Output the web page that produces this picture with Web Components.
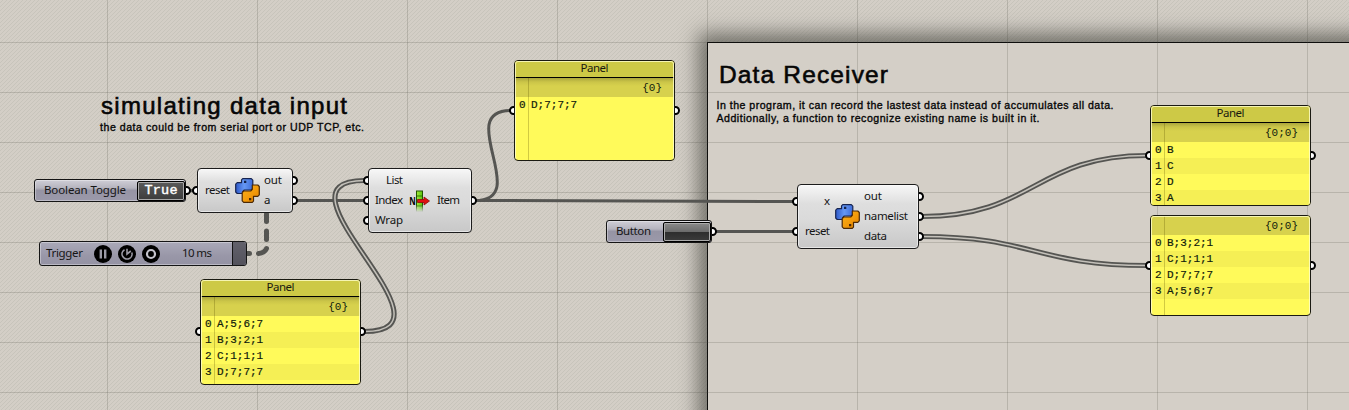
<!DOCTYPE html>
<html lang="en">
<head>
<meta charset="utf-8">
<title>Node canvas</title>
<style>
html,body{margin:0;height:410px;overflow:hidden}
</style>
</head>
<body>
<node-canvas></node-canvas>
<script>
const UI = '"Noto Sans","Open Sans",sans-serif';
const MONO = '"Liberation Mono",monospace';

function define(name, html, setup) {
  const t = document.createElement('template');
  t.innerHTML = html;
  customElements.define(name, class extends HTMLElement {
    connectedCallback() {
      if (this.shadowRoot) return;
      this.attachShadow({mode: 'open'}).append(t.content.cloneNode(true));
      if (setup) setup(this, this.shadowRoot);
    }
  });
}

/* single line of text whose tracking is adjusted to a given width */
define('fit-text', `<style>:host{display:block;white-space:pre;line-height:1}span{display:inline-block}</style><span><slot></slot></span>`,
  (el, root) => {
    const w = +el.getAttribute('w');
    if (!w) return;
    const n = el.textContent.length;
    const s = root.querySelector('span');
    el.style.width = w + 'px';
    s.style.letterSpacing = (w - s.getBoundingClientRect().width) / (n - 1) + 'px';
  });

/* half-hidden connection grip on the edge of a node */
define('node-port', `<style>
:host{position:absolute;box-sizing:border-box;width:9px;height:9px;border:2px solid #000;border-radius:50%;background:#fff;z-index:-1}
</style>`, (el) => {
  el.style.top = (+el.getAttribute('y') - 4.5) + 'px';
  el.style[el.getAttribute('side')] = '-5px';
});

define('python-icon', `<style>:host{display:block;width:25px;height:25px}svg{display:block}</style>
<svg width="25" height="25" viewBox="0 0 25 25">
<defs><linearGradient id="b" x1="0" y1="0" x2="1" y2="0"><stop offset="0" stop-color="#2d58c8"/><stop offset=".5" stop-color="#6698f4"/><stop offset="1" stop-color="#3d6cd8"/></linearGradient>
<linearGradient id="o" x1="0" y1="0" x2="1" y2="1"><stop offset="0" stop-color="#f9b31c"/><stop offset=".55" stop-color="#f39a0a"/><stop offset="1" stop-color="#e07f00"/></linearGradient></defs>
<path d="M7.700 .7H16.300L17.800 2.200V10.500L16.300 12H9.300L7.700 13.600V15.500H2.200L.7 14V6.200L2.200 4.700H6.500V1.900Z" fill="url(#b)" stroke="#17244f" stroke-width="1.200" stroke-linejoin="round"/>
<path d="M17.300 24.300H8.700L7.200 22.800V14.500L8.700 13H15.700L17.300 11.400V7H22.800L24.300 8.500V16.800L22.800 18.300H18.500V23.100Z" fill="url(#o)" stroke="#4b2907" stroke-width="1.200" stroke-linejoin="round"/>
<rect x="9" y="2.700" width="2.300" height="2.300" fill="#14224a"/><rect x="14" y="20" width="2.300" height="2.300" fill="#4b2907"/>
</svg>`);

define('item-icon', `<style>:host{display:block;width:24px;height:24px}svg{display:block;overflow:visible}text{font:bold 10px ${UI}}</style>
<svg width="24" height="24" viewBox="0 0 24 24">
<defs><linearGradient id="g" x1="0" y1="0" x2="1" y2="0"><stop offset="0" stop-color="#a4e83c"/><stop offset="1" stop-color="#56c40c"/></linearGradient>
<linearGradient id="f" x1="0" y1="0" x2="0" y2="1"><stop offset=".7" stop-color="#fff"/><stop offset="1" stop-color="#000"/></linearGradient>
<mask id="m"><rect width="24" height="24" fill="url(#f)"/></mask></defs>
<g mask="url(#m)"><rect x="7.500" y="3" width="6" height="21" fill="url(#g)" stroke="#235400"/><path d="M8 8h5M8 18h5" stroke="#2f7a00"/></g>
<text x="0.300" y="16.500" textLength="6.500" lengthAdjust="spacingAndGlyphs">N</text>
<path d="M8.500 11.500H15V9L20.500 13L15 17V14.500H8.500Z" fill="#e01010" stroke="#8c0a0a" stroke-width=".8"/>
</svg>`);

/* light component body: inputs, icon, outputs */
define('node-component', `<style>
:host{position:absolute;isolation:isolate;font:11.500px ${UI};color:#141414}
.body{box-sizing:border-box;width:100%;height:100%;border:1px solid #1c1c1c;border-radius:4px;background:linear-gradient(#f7f7f7 0,#ededed 12%,#dedede 30%,#dadada 55%,#c8c8c8 100%);box-shadow:inset 0 0 0 1px rgba(255,255,255,.55);display:flex;align-items:center}
::slotted([slot=in]),::slotted([slot=out]){display:flex;flex-direction:column;justify-content:space-around;padding-bottom:2px}
</style><slot name="port"></slot><div class="body"><slot name="in"></slot><slot name="icon"></slot><slot name="out"></slot></div>`);

/* violet-grey parameter bar */
define('node-bar', `<style>
:host{position:absolute;isolation:isolate;font:11.500px ${UI};color:#161616}
.body{box-sizing:border-box;width:100%;height:100%;border:1px solid #151515;border-radius:3px;background:var(--bar,linear-gradient(#cfced6 0,#b5b4be 38%,#9694a4 50%,#9b99aa 100%));box-shadow:inset 0 0 0 1px rgba(255,255,255,.35);display:flex;align-items:center;overflow:hidden}
</style><slot name="port"></slot><div class="body"><slot></slot></div>`);

define('value-well', `<style>
:host{display:flex;box-sizing:border-box;height:20px;border:1px solid #000;border-radius:2px;box-shadow:inset 0 0 0 1px #aaa;background:var(--well,linear-gradient(#5a5a5a,#3c3c3c));align-items:center;justify-content:center;color:#fff;font:13.500px ${MONO};-webkit-text-stroke:.4px #fff;margin-left:auto}
</style><slot></slot>`);

define('round-button', `<style>:host{display:block;width:18px;height:18px}svg{display:block}</style>
<svg width="18" height="18" viewBox="0 0 18 18"><circle cx="9" cy="9" r="9"/><g fill="none" stroke="#9b9aa6" stroke-width="1.700"></g></svg>`,
  (el, root) => {
    root.querySelector('g').innerHTML = {
      pause: '<path d="M6.800 4.500v9M11.200 4.500v9" stroke-width="2.400"/>',
      reset: '<path d="M13.800 7.500A5 5 0 1 1 6.500 4.700M9 3.800V9L12.800 6" stroke-width="1.600"/>',
      stop: '<circle cx="9" cy="9" r="4" stroke="#c4c3cc" stroke-width="2.200"/>'
    }[el.getAttribute('kind')];
  });

/* yellow data panel */
define('data-panel', `<style>
:host{position:absolute;isolation:isolate;width:161px;color:#10200c;font:11px ${MONO}}
.body{box-sizing:border-box;width:100%;height:100%;border:1px solid #1a1a12;border-radius:4px;background:#fffa5a;overflow:hidden;display:flex;flex-direction:column;position:relative}
.body::after{content:"";position:absolute;inset:0;border:1px solid rgba(255,255,205,.8);border-bottom-color:transparent;border-radius:3px}
.title{height:17px;flex:none;box-sizing:border-box;border-bottom:1px solid #000;background:#cdc946;font:11.500px ${UI};display:flex;justify-content:center;line-height:14px;color:#1a1a10}
.path{height:19px;flex:none;background:#d7d14d;display:flex;justify-content:flex-end;align-items:center;padding-right:12px}
.title+.path{background:linear-gradient(#aaa63c 0,#cbc548 4px,#d7d14d 8px)}
.row{height:16px;flex:none;display:flex;line-height:16px;-webkit-text-stroke:.2px #10200c}
.row:nth-child(even){background:#f5ef55}
.i{width:16px;box-sizing:border-box;padding-left:4px;flex:none}
.rows{flex:none}
.rule{position:absolute;left:13px;top:var(--rule,17px);bottom:0;width:1px;background:rgba(90,80,0,.28)}
</style><slot name="port"></slot><div class="body"></div>`, (el, root) => {
  const title = el.getAttribute('label'), rows = el.getAttribute('rows').split('|');
  if (!title) el.style.setProperty('--rule', '0');
  root.querySelector('.body').innerHTML =
    (title ? `<div class="title"><fit-text w="28" style="line-height:14px">${title}</fit-text></div>` : '') +
    `<div class="path"><span>${el.getAttribute('path')}</span></div><div class="rows">` +
    rows.map((r, i) => `<div class="row"><span class="i">${i}</span><span>${r}</span></div>`).join('') +
    '</div><div class="rule"></div>';
});

/* group frame with a soft dark halo */
define('group-frame', `<style>
:host{position:absolute;left:707px;top:42px;width:700px;height:440px;box-sizing:border-box;border:1px solid #000;background:#d4cfc7;box-shadow:0 0 18px 9px rgba(60,60,54,.62)}
</style>`);

define('canvas-note', `<style>:host{position:absolute;color:#060606;font-family:"Liberation Sans",Arial,sans-serif;display:flex;flex-direction:column}</style><slot></slot>`);

define('node-canvas', `<style>
:host{display:block;position:relative;width:1349px;height:410px;overflow:hidden;
background:repeating-linear-gradient(135deg,#d3cec6 0 1.800px,#c7c4bb 1.800px 2.828px)}
.grid,.wires{position:absolute;left:0;top:0}
.grid{width:1349px;height:410px;background:
 linear-gradient(90deg,rgba(70,70,60,.2) 1px,transparent 1px) 107px 0/150px 100%,
 linear-gradient(rgba(70,70,60,.2) 1px,transparent 1px) 0 42px/100% 50px}
.wires{fill:none}
.s{stroke:#555552;stroke-width:3}
.d{stroke:#555552;stroke-width:5.200}
.l{stroke:#c4c1ba;stroke-width:1.500}
.bold{-webkit-text-stroke:.6px #060606}
.semi{-webkit-text-stroke:.35px #060606;font-size:10.600px}
</style>
<group-frame></group-frame>
<div class="grid"></div>
<svg class="wires" width="1349" height="410">
 <path class="s" d="M188 190.500H196M297 200.500H365M711 231.500H794"/>
 <path class="s" d="M475 200.500C600 200.500 670 201.500 794 201.500"/>
 <path class="s" d="M475 200.500C533 200.500 453 110.500 511 110.500"/>
 <path class="d" d="M364.500 331.500C467 331.500 262 180.500 364.500 180.500"/><path class="l" d="M364.500 331.500C467 331.500 262 180.500 364.500 180.500"/>
 <path class="d" d="M922 216.500C1034 216.500 1035 155.500 1147 155.500"/><path class="l" d="M922 216.500C1034 216.500 1035 155.500 1147 155.500"/>
 <path class="d" d="M922 236.500C1034 236.500 1035 265.500 1147 265.500"/><path class="l" d="M922 236.500C1034 236.500 1035 265.500 1147 265.500"/>
 <path stroke="#555552" stroke-width="5" stroke-linecap="round" d="M266.500 214V221.500M266.500 231V239.500M266.500 248.500Q264.500 253 258.500 253.500M249.500 253.500H247"/>
</svg>

<canvas-note style="left:101px;top:94px"><fit-text class="bold" w="246" style="font-size:24px;line-height:24px">simulating data input</fit-text></canvas-note>
<canvas-note style="left:100px;top:121px"><fit-text class="semi" w="264" style="line-height:13px">the data could be from serial port or UDP TCP, etc.</fit-text></canvas-note>
<canvas-note style="left:719px;top:62px"><fit-text class="bold" w="169" style="font-size:24.500px;line-height:25px">Data Receiver</fit-text></canvas-note>
<canvas-note style="left:716.500px;top:99px"><fit-text class="semi" w="397" style="line-height:12.500px">In the program, it can record the lastest data instead of accumulates all data.</fit-text><fit-text class="semi" w="323" style="line-height:12.500px">Additionally, a function to recognize existing name is built in it.</fit-text></canvas-note>

<node-bar style="left:34px;top:179px;width:152px;height:23px">
 <node-port slot="port" side="right" y="11.500"></node-port>
 <fit-text w="82" style="margin-left:9px;margin-top:-1px">Boolean Toggle</fit-text>
 <value-well style="width:48px;margin-right:0"><fit-text w="33" style="margin-top:1px">True</fit-text></value-well>
</node-bar>

<node-component style="left:197px;top:168px;width:96px;height:45px">
 <node-port slot="port" side="left" y="22.500"></node-port><node-port slot="port" side="right" y="12.500"></node-port><node-port slot="port" side="right" y="32.500"></node-port>
 <div slot="in" style="margin-left:7px"><fit-text w="25">reset</fit-text></div>
 <python-icon slot="icon" style="margin-left:5px;margin-top:-1px"></python-icon>
 <div slot="out" style="margin-left:4px;height:40px"><fit-text w="18">out</fit-text><fit-text>a</fit-text></div>
</node-component>

<node-bar style="left:39px;top:241px;width:208px;height:25px;--bar:linear-gradient(#aaa9b8,#9997a8 60%,#9492a3)">
 <fit-text w="37" style="margin-left:6px;margin-top:-1px">Trigger</fit-text>
 <round-button kind="pause" style="margin-left:10.500px"></round-button><round-button kind="reset" style="margin-left:6px"></round-button><round-button kind="stop" style="margin-left:6px"></round-button>
 <fit-text w="30" style="margin-left:22.500px;margin-top:-1px">10 ms</fit-text>
 <div style="margin-left:auto;width:13px;height:100%;background:linear-gradient(#62616b,#53525c);border-left:1px solid #151515"></div>
</node-bar>

<node-component style="left:368px;top:168px;width:104px;height:65px">
 <node-port slot="port" side="left" y="12.500"></node-port><node-port slot="port" side="left" y="32.500"></node-port><node-port slot="port" side="left" y="52.500"></node-port><node-port slot="port" side="right" y="32.500"></node-port>
 <div slot="in" style="margin-left:6px;height:60px;width:28px"><fit-text w="17" style="margin-left:11px">List</fit-text><fit-text w="28">Index</fit-text><fit-text w="28">Wrap</fit-text></div>
 <item-icon slot="icon" style="margin-left:6px;margin-top:-2px"></item-icon>
 <div slot="out" style="margin-left:4px"><fit-text w="23">Item</fit-text></div>
</node-component>

<data-panel label="Panel" path="{0}" rows="A;5;6;7|B;3;2;1|C;1;1;1|D;7;7;7" style="left:200px;top:279px;height:106px"><node-port slot="port" side="left" y="52.500"></node-port><node-port slot="port" side="right" y="52.500"></node-port></data-panel>
<data-panel label="Panel" path="{0}" rows="D;7;7;7" style="left:514px;top:60px;height:101px"><node-port slot="port" side="left" y="50.500"></node-port><node-port slot="port" side="right" y="50.500"></node-port></data-panel>

<node-bar style="left:606px;top:220px;width:106px;height:23px">
 <node-port slot="port" side="right" y="11.500"></node-port>
 <fit-text w="35" style="margin-left:9px;margin-top:-1px">Button</fit-text>
 <value-well style="width:48px;margin-right:0;--well:linear-gradient(#8a8a8a 0,#6c6c6c 48%,#2e2e2e 52%,#3c3c3c 100%)"></value-well>
</node-bar>

<node-component style="left:797px;top:184px;width:122px;height:65px">
 <node-port slot="port" side="left" y="17.500"></node-port><node-port slot="port" side="left" y="47.500"></node-port>
 <node-port slot="port" side="right" y="12.500"></node-port><node-port slot="port" side="right" y="32.500"></node-port><node-port slot="port" side="right" y="52.500"></node-port>
 <div slot="in" style="margin-left:7px;height:60px"><fit-text style="text-align:right">x</fit-text><fit-text w="25">reset</fit-text></div>
 <python-icon slot="icon" style="margin-left:5px;margin-top:-1px"></python-icon>
 <div slot="out" style="margin-left:4px;height:60px"><fit-text w="18">out</fit-text><fit-text w="44">namelist</fit-text><fit-text w="23">data</fit-text></div>
</node-component>

<data-panel label="Panel" path="{0;0}" rows="B|C|D|A" style="left:1150px;top:105px;height:101px"><node-port slot="port" side="left" y="50.500"></node-port><node-port slot="port" side="right" y="50.500"></node-port></data-panel>
<data-panel path="{0;0}" rows="B;3;2;1|C;1;1;1|D;7;7;7|A;5;6;7" style="left:1150px;top:215px;height:101px"><node-port slot="port" side="left" y="50.500"></node-port><node-port slot="port" side="right" y="50.500"></node-port></data-panel>
`);
</script>
</body>
</html>
